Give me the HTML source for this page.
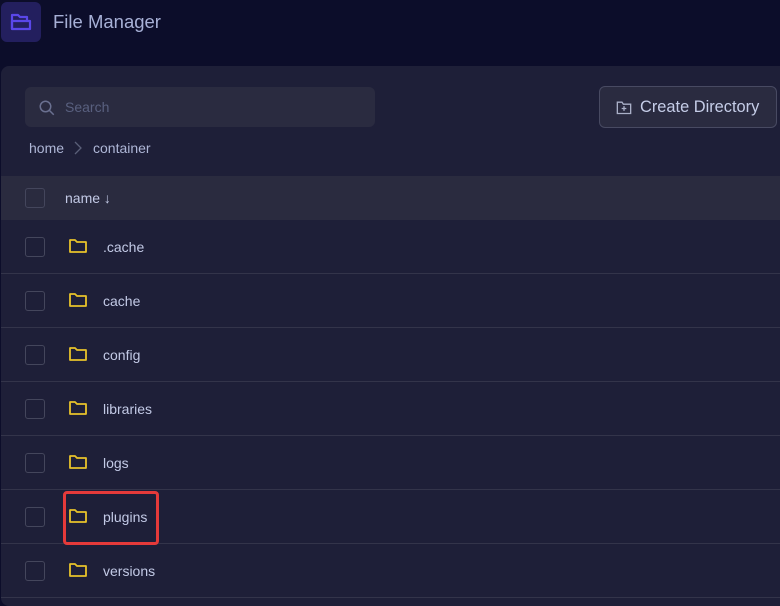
<!DOCTYPE html>
<html><head><style>
*{margin:0;padding:0;box-sizing:border-box}
body{width:780px;height:600px;overflow:hidden;background:#0c0d2a;font-family:"Liberation Sans",sans-serif;position:relative}
.logo{position:absolute;left:1px;top:2px;width:40px;height:40px;border-radius:6px;background:#231f5e;display:flex;align-items:center;justify-content:center}
.title{position:absolute;left:53px;top:11px;font-size:18.5px;color:#a7b0d6}
.panel{position:absolute;left:1px;top:66px;width:790px;height:540px;background:#1e1f38;border-radius:8px;overflow:hidden}
.search{position:absolute;left:24px;top:21px;width:350px;height:40px;background:#2a2b40;border-radius:6px}
.search span{position:absolute;left:40px;top:12px;font-size:14px;color:#59607f}
.btn{position:absolute;left:598px;top:20px;width:178px;height:42px;border:1px solid #484a62;background:#2a2b40;border-radius:6px;color:#c5cde8;font-size:16.4px}
.btn span{position:absolute;left:40px;top:11px}
.crumb{position:absolute;top:74px;font-size:14px;color:#aeb6d6}
.head{position:absolute;left:0;top:110px;width:100%;height:44px;background:#2a2b3f}
.cb{position:absolute;left:24px;width:20px;height:20px;border:1px solid #44465c;border-radius:3px}
.row{position:absolute;left:0;width:100%;height:54px;border-bottom:1px solid #33344a}
.row .cb{top:17px}
.row svg{position:absolute;left:68px;top:18px}
.row span{position:absolute;left:102px;top:19px;font-size:14px;color:#c3cae6}
</style></head><body>
<div class="logo"><svg width="22" height="20" viewBox="0 0 22 20" fill="none" stroke="#5a47e8" stroke-width="2.2" stroke-linejoin="round"><path d="M2 17V3h6l2 2h7v3"/><path d="M2 17V9h18v8z"/></svg></div>
<div class="title">File Manager</div>
<div class="panel">
<div class="search"><svg style="position:absolute;left:13px;top:12px" width="18" height="18" viewBox="0 0 24 24" fill="none" stroke="#6a7090" stroke-width="2"><circle cx="10" cy="10" r="7"/><path d="M15 15l6 6"/></svg><span>Search</span></div>
<div class="btn"><svg style="position:absolute;left:16px;top:13px" width="16" height="15" viewBox="0 0 24 22" fill="none" stroke="#aab0c8" stroke-width="2"><path d="M2 3h7l2 3h11v14H2z"/><path d="M12 9v7M8.5 12.5h7"/></svg><span>Create Directory</span></div>
<div class="crumb" style="left:28px">home</div>
<svg style="position:absolute;left:73px;top:75px" width="8" height="14" viewBox="0 0 8 14" fill="none" stroke="#5a5f78" stroke-width="1.3"><path d="M1 1l6 6-6 6"/></svg>
<div class="crumb" style="left:92px">container</div>
<div class="head"><div class="cb" style="top:12px"></div><span style="position:absolute;left:64px;top:14px;font-size:14px;color:#c3cae6">name ↓</span></div>
<div class="row" style="top:154px"><div class="cb"></div><svg width="18" height="16" viewBox="0 0 18 16" fill="none" stroke="#e8c22a" stroke-width="1.8" stroke-linejoin="round"><path d="M1 2h5l2 2h9v10H1z"/></svg><span>.cache</span></div>
<div class="row" style="top:208px"><div class="cb"></div><svg width="18" height="16" viewBox="0 0 18 16" fill="none" stroke="#e8c22a" stroke-width="1.8" stroke-linejoin="round"><path d="M1 2h5l2 2h9v10H1z"/></svg><span>cache</span></div>
<div class="row" style="top:262px"><div class="cb"></div><svg width="18" height="16" viewBox="0 0 18 16" fill="none" stroke="#e8c22a" stroke-width="1.8" stroke-linejoin="round"><path d="M1 2h5l2 2h9v10H1z"/></svg><span>config</span></div>
<div class="row" style="top:316px"><div class="cb"></div><svg width="18" height="16" viewBox="0 0 18 16" fill="none" stroke="#e8c22a" stroke-width="1.8" stroke-linejoin="round"><path d="M1 2h5l2 2h9v10H1z"/></svg><span>libraries</span></div>
<div class="row" style="top:370px"><div class="cb"></div><svg width="18" height="16" viewBox="0 0 18 16" fill="none" stroke="#e8c22a" stroke-width="1.8" stroke-linejoin="round"><path d="M1 2h5l2 2h9v10H1z"/></svg><span>logs</span></div>
<div class="row" style="top:424px"><div class="cb"></div><svg width="18" height="16" viewBox="0 0 18 16" fill="none" stroke="#e8c22a" stroke-width="1.8" stroke-linejoin="round"><path d="M1 2h5l2 2h9v10H1z"/></svg><span>plugins</span></div>
<div class="row" style="top:478px"><div class="cb"></div><svg width="18" height="16" viewBox="0 0 18 16" fill="none" stroke="#e8c22a" stroke-width="1.8" stroke-linejoin="round"><path d="M1 2h5l2 2h9v10H1z"/></svg><span>versions</span></div>
</div>
<div style="position:absolute;left:63px;top:491px;width:96px;height:54px;border:3px solid #e53a3a;border-radius:4px"></div>
</body></html>
